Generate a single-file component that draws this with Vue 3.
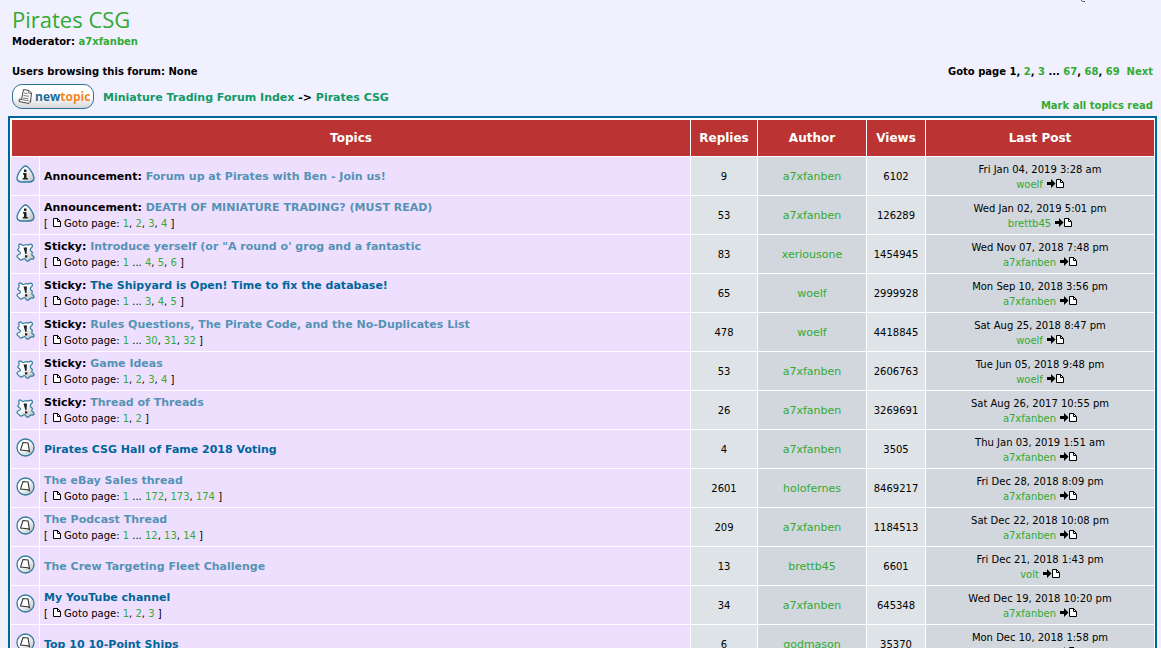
<script setup>
const rows = [
  { kind: 'announce', prefix: 'Announcement:', title: 'Forum up at Pirates with Ben - Join us!', seen: true, pages: '', replies: 9, author: 'a7xfanben', views: 6102, date: 'Fri Jan 04, 2019 3:28 am', last: 'woelf' },
  { kind: 'announce', prefix: 'Announcement:', title: 'DEATH OF MINIATURE TRADING? (MUST READ)', seen: true, pages: '1,2,3,4', replies: 53, author: 'a7xfanben', views: 126289, date: 'Wed Jan 02, 2019 5:01 pm', last: 'brettb45' },
  { kind: 'sticky', prefix: 'Sticky:', title: 'Introduce yerself (or "A round o\' grog and a fantastic', seen: true, pages: '1…4,5,6', replies: 83, author: 'xeriousone', views: 1454945, date: 'Wed Nov 07, 2018 7:48 pm', last: 'a7xfanben' },
  { kind: 'sticky', prefix: 'Sticky:', title: 'The Shipyard is Open! Time to fix the database!', seen: false, pages: '1…3,4,5', replies: 65, author: 'woelf', views: 2999928, date: 'Mon Sep 10, 2018 3:56 pm', last: 'a7xfanben' },
  { kind: 'sticky', prefix: 'Sticky:', title: 'Rules Questions, The Pirate Code, and the No-Duplicates List', seen: true, pages: '1…30,31,32', replies: 478, author: 'woelf', views: 4418845, date: 'Sat Aug 25, 2018 8:47 pm', last: 'woelf' },
  { kind: 'sticky', prefix: 'Sticky:', title: 'Game Ideas', seen: true, pages: '1,2,3,4', replies: 53, author: 'a7xfanben', views: 2606763, date: 'Tue Jun 05, 2018 9:48 pm', last: 'woelf' },
  { kind: 'sticky', prefix: 'Sticky:', title: 'Thread of Threads', seen: true, pages: '1,2', replies: 26, author: 'a7xfanben', views: 3269691, date: 'Sat Aug 26, 2017 10:55 pm', last: 'a7xfanben' },
  { kind: 'normal', prefix: '', title: 'Pirates CSG Hall of Fame 2018 Voting', seen: false, pages: '', replies: 4, author: 'a7xfanben', views: 3505, date: 'Thu Jan 03, 2019 1:51 am', last: 'a7xfanben' },
  { kind: 'normal', prefix: '', title: 'The eBay Sales thread', seen: true, pages: '1…172,173,174', replies: 2601, author: 'holofernes', views: 8469217, date: 'Fri Dec 28, 2018 8:09 pm', last: 'a7xfanben' },
  { kind: 'normal', prefix: '', title: 'The Podcast Thread', seen: true, pages: '1…12,13,14', replies: 209, author: 'a7xfanben', views: 1184513, date: 'Sat Dec 22, 2018 10:08 pm', last: 'a7xfanben' },
  { kind: 'normal', prefix: '', title: 'The Crew Targeting Fleet Challenge', seen: true, pages: '', replies: 13, author: 'brettb45', views: 6601, date: 'Fri Dec 21, 2018 1:43 pm', last: 'volt' },
  { kind: 'normal', prefix: '', title: 'My YouTube channel', seen: false, pages: '1,2,3', replies: 34, author: 'a7xfanben', views: 645348, date: 'Wed Dec 19, 2018 10:20 pm', last: 'a7xfanben' },
  { kind: 'normal', prefix: '', title: 'Top 10 10-Point Ships', seen: false, pages: '', replies: 6, author: 'godmason', views: 35370, date: 'Mon Dec 10, 2018 1:58 pm', last: 'a7xfanben' },
]

// Splits "1…4,5,6" into page numbers, each with the separator that follows it.
function pageParts(text) {
  return text.split(/(?<=[…,])/).map((part) => ({
    number: part.replace(/[…,]/, ''),
    after: part.endsWith('…') ? ' ... ' : part.endsWith(',') ? ', ' : '',
  }))
}
</script>

<template>
  <div class="page">
    <svg class="corner" width="4" height="2" viewBox="0 0 4 2" aria-hidden="true"><path d="M0 0h1v1h3v1H1V1H0z" fill="#49658c" /></svg>
    <svg class="defs" width="0" height="0" aria-hidden="true">
      <defs>
        <linearGradient id="face" x1="0" y1="0" x2="1" y2="1">
          <stop offset="0.4" stop-color="#fff" />
          <stop offset="1" stop-color="#b4b9bc" />
        </linearGradient>
      </defs>
    </svg>

    <header>
      <h1><a href="#">Pirates CSG</a></h1>
      <p class="small">Moderator: <a href="#">a7xfanben</a></p>
      <div class="line small">
        <span>Users browsing this forum: None</span>
        <span>Goto page 1, <a href="#">2</a>, <a href="#">3</a> ... <a href="#">67</a>, <a href="#">68</a>, <a href="#">69</a>&nbsp; <a href="#">Next</a></span>
      </div>
      <div class="actions">
        <button class="new-topic" type="button">
          <svg width="15" height="17" viewBox="0 0 15 17" aria-hidden="true">
            <path d="M5.500 1.500L11 2.500 13.500 5 12.500 14 11 15.500 1 13.500 1.500 11 3.500 11.500z" fill="#fff" stroke="#444" />
            <path d="M11 2.500l-.5 2.500 3 .5M6 5l3.500 .5M5.500 7.500l5.500 .8M5 10l5.500 .8M3.500 11.500l8 1.500" fill="none" stroke="#666" stroke-width=".9" />
          </svg>
          <span class="new">new</span><span class="topic">topic</span>
        </button>
        <nav><a href="#">Miniature Trading Forum Index</a> -&gt; <a href="#">Pirates CSG</a></nav>
        <a class="mark small" href="#">Mark all topics read</a>
      </div>
    </header>

    <table>
      <colgroup>
        <col class="c-icon" /><col /><col class="c-replies" /><col class="c-author" /><col class="c-views" /><col class="c-last" />
      </colgroup>
      <thead>
        <tr>
          <th class="first" colspan="2">Topics</th>
          <th>Replies</th>
          <th>Author</th>
          <th>Views</th>
          <th>Last Post</th>
        </tr>
      </thead>
      <tbody>
        <tr v-for="row in rows" :key="row.title">
          <td class="icon">
            <svg v-if="row.kind === 'announce'" width="19" height="19" viewBox="0 0 19 19" role="img" aria-label="Announcement">
              <path d="M9.500 1C12.500 1 17.500 9 18 12.500C18.300 15.500 16 17 13 17H6C3 17 .7 15.500 1 12.500C1.500 9 6.500 1 9.500 1z" fill="url(#face)" stroke="#2d7c9e" stroke-width="1.300" />
              <path d="M8 4.500h2.500V7H8zM7 8h3.500v5h1.300v1.500H6.800V13H8V9.500H7z" fill="#222" />
            </svg>
            <svg v-else-if="row.kind === 'sticky'" width="19" height="19" viewBox="0 0 19 19" role="img" aria-label="Sticky">
              <path d="M3.500 1C5.500 .6 6 2.800 7.500 2.500C9 2.300 9.500 1.300 11 1.800C12.500 2.800 13.500 .8 15.300 1.200C17.200 2 16.500 4 15 5.200C13.800 6.500 14.200 8 16 9C17 10 15.500 11.200 15.800 12C16.500 13 18.300 13.300 18 15C17.500 16.800 15.500 15.800 14.500 16C13.500 16.800 13 18.500 11.300 18.200C9.500 17.800 10 15.800 8.500 15.500C7 15.500 6.500 17.300 4.500 17C3 16.800 3.300 15.500 2.500 15C1 14.500 .6 13.500 1.500 12.300C2.500 11.300 4.500 11.500 4.500 10C4.500 8.300 1.800 8.500 1.800 6.800C2 5.500 3.500 5.500 3.200 4.200C3 3.200 2 2 3.500 1z" fill="url(#face)" stroke="#2d7c9e" stroke-width="1.200" />
              <path d="M7.500 4.500L11 4.500 10.500 11H9.300zM9 12.200h2.300v2.300H9z" fill="#222" />
            </svg>
            <svg v-else width="19" height="19" viewBox="0 0 19 19" role="img" aria-label="Topic">
              <circle cx="9.500" cy="9.500" r="8.500" fill="url(#face)" stroke="#2d7c9e" stroke-width="1.300" />
              <path d="M7 4.500L12 5 13.500 13.800 11.800 12.800 4.500 12z" fill="#fff" stroke="#333" stroke-width="1.100" />
            </svg>
          </td>
          <td class="subject">
            <div class="title">
              <template v-if="row.prefix">{{ row.prefix }}&nbsp;</template><a href="#" :class="{ seen: row.seen }">{{ row.title }}</a>
            </div>
            <div v-if="row.pages" class="pages">
              [ <svg width="8" height="9" viewBox="0 0 8 9" aria-hidden="true"><path d="M.5 .5h4l3 3v5h-7z" fill="#fff" stroke="#000" /><path d="M4.500 0v3.500H7" fill="none" stroke="#000" /></svg>Goto page: <template v-for="p in pageParts(row.pages)" :key="p.number"><a href="#">{{ p.number }}</a>{{ p.after }}</template> ]
            </div>
          </td>
          <td class="num">{{ row.replies }}</td>
          <td class="author"><a href="#">{{ row.author }}</a></td>
          <td class="num">{{ row.views }}</td>
          <td class="last">
            <div>{{ row.date }}</div>
            <div>
              <a href="#">{{ row.last }}</a>
              <a class="jump" href="#" aria-label="View latest post"><svg width="17" height="9" viewBox="0 0 17 9" aria-hidden="true"><path d="M0 3h4V0l4.500 4.500L4 9V6H0z" fill="#000" /><path d="M9.500 .5h4l3 3v5h-7z" fill="#fff" stroke="#000" /><path d="M13.500 0v3.500H16" fill="none" stroke="#000" /></svg></a>
            </div>
          </td>
        </tr>
      </tbody>
    </table>
  </div>
</template>

<style>
html {
  scrollbar-width: none;
}
body {
  background: #f0f0ff;
}
</style>

<style scoped>
.page {
  position: relative;
  padding: 7px 4px 0 8px;
  font-family: Verdana, "DejaVu Sans", sans-serif;
  font-size: 11px;
  color: #000;
}
.corner {
  position: absolute;
  top: 0;
  right: 76px;
}
.defs {
  position: absolute;
}
a {
  color: #33aa33;
  text-decoration: none;
}
header {
  padding: 0 4px;
}
h1 {
  margin: 0 0 4px;
  font: 500 22px/24px "Trebuchet MS", "Open Sans", sans-serif;
}
.small {
  font-size: 10px;
  line-height: 14px;
  font-weight: bold;
}
p {
  margin: 0 0 16px;
}
.line {
  display: flex;
  justify-content: space-between;
}
.actions {
  display: flex;
  align-items: center;
  height: 37px;
}
.new-topic {
  display: flex;
  align-items: center;
  box-sizing: border-box;
  width: 82px;
  height: 25px;
  margin: 0 9px 2px 0;
  padding: 0 0 0 5px;
  border: 1px solid #2d7298;
  border-radius: 10px;
  background: linear-gradient(#fff 50%, #d4d6da);
  font: bold 12px/14px "Open Sans", sans-serif;
  white-space: nowrap;
}
.new {
  margin-left: 2px;
  color: #1f6a94;
}
.topic {
  color: #f5871f;
}
nav {
  font-size: 11px;
  font-weight: bold;
}
nav a {
  color: #119966;
}
.mark {
  margin: 17px 0 0 auto;
}
table {
  width: 100%;
  table-layout: fixed;
  border: 2px solid #006699;
  border-spacing: 1px;
  background: #fff;
}
.c-icon { width: 28px; }
.c-replies { width: 66px; }
.c-author { width: 108px; }
.c-views { width: 58px; }
.c-last { width: 228px; }
th {
  height: 36px;
  padding: 0;
  border-top: 1px solid #fff;
  background: #bb3333;
  color: #fff;
  font-size: 12px;
}
.first {
  border-left: 1px solid #fff;
}
td {
  height: 38px;
  box-sizing: border-box;
  padding: 0;
  text-align: center;
  background: #d1d7dc;
}
.icon {
  padding-bottom: 4px;
  background: #efdfff;
}
.icon svg {
  display: block;
  margin: 0 auto;
}
.subject {
  padding: 1px 0 0 4px;
  text-align: left;
  background: #efdfff;
}
.title {
  font-weight: bold;
  line-height: 16px;
}
.title a {
  color: #006699;
}
.title .seen {
  color: #5493b4;
}
.pages,
.last,
.num {
  font-size: 10px;
  line-height: 15px;
}
.pages svg {
  margin: 0 3px 0 2px;
}
.num {
  background: #dee3e7;
}
.last {
  padding-top: 2px;
}
.jump svg {
  margin-left: 4px;
  vertical-align: 0;
}
</style>
